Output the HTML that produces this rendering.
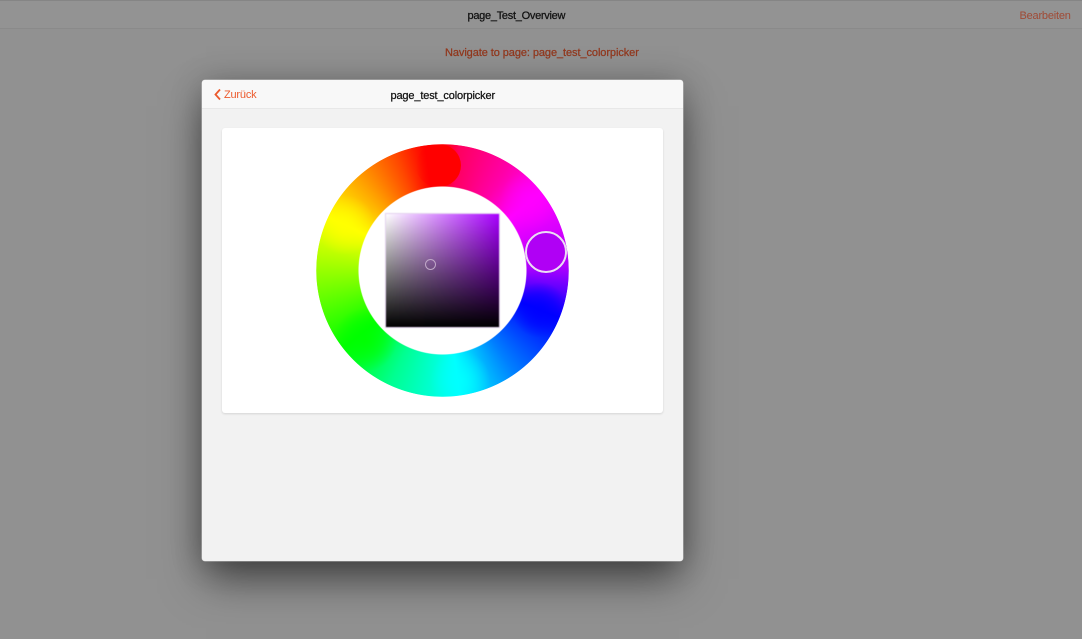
<!DOCTYPE html>
<html>
<head>
<meta charset="utf-8">
<style>
html,body{margin:0;padding:0;width:1082px;height:639px;overflow:hidden;background:#919191;font-family:"Liberation Sans",sans-serif;}
.abs{position:absolute;}
.t{position:absolute;white-space:nowrap;font-size:11px;line-height:14px;-webkit-text-stroke:.25px currentColor;filter:blur(.35px);}
#top{left:0;top:0;width:1082px;height:28px;background:#939393;border-bottom:1px solid #8a8a8a;box-shadow:inset 0 1px 0 #858585;}
#modal{left:202px;top:80px;width:481px;height:481px;background:#f2f2f2;border-radius:3px;box-shadow:0 0 0 .4px #cfcfcf,0 22px 40px -4px rgba(0,0,0,.5),0 2px 32px rgba(0,0,0,.24);overflow:hidden;}
#head{left:0;top:0;width:481px;height:28px;background:#f8f8f8;border-bottom:1px solid #e8e8e8;}
#card{left:222px;top:128px;width:441px;height:285px;background:#fff;border-radius:3px;box-shadow:0 1px 2px rgba(0,0,0,.13);}
#ring{left:316px;top:144px;width:253px;height:253px;border-radius:50%;overflow:hidden;
background:
 radial-gradient(circle 30px at 29px 81px,rgba(255,255,0,.9) 0,rgba(255,255,0,.45) 50%,rgba(255,255,0,0) 100%),
 radial-gradient(circle 30px at 214px 56px,rgba(255,0,255,.9) 0,rgba(255,0,255,.45) 50%,rgba(255,0,255,0) 100%),
 radial-gradient(circle 28px at 224px 166px,rgba(0,0,255,.9) 0,rgba(0,0,255,.5) 55%,rgba(0,0,255,0) 100%),
 radial-gradient(circle 30px at 144px 236px,rgba(0,255,255,.9) 0,rgba(0,255,255,.45) 50%,rgba(0,255,255,0) 100%),
 radial-gradient(circle 32px at 49px 196px,rgba(0,255,0,.9) 0,rgba(0,255,0,.5) 55%,rgba(0,255,0,0) 100%),
 conic-gradient(from 0deg,#f00 0deg,#ff0060 8deg,#ff00a8 32deg,#f0f 52deg,#b000ff 88deg,#00f 112deg,#0080ff 145deg,#0ff 172deg,#00ff90 205deg,#0f0 232deg,#90ff00 268deg,#ff0 295deg,#ffa000 318deg,#ff4800 338deg,#f00 352deg,#f00 360deg);
-webkit-mask:radial-gradient(circle 126.5px at center,transparent 83.5px,#000 84.5px,#000 126px,transparent 126.5px);
mask:radial-gradient(circle 126.5px at center,transparent 83.5px,#000 84.5px,#000 126px,transparent 126.5px);}
#blob{position:absolute;left:100px;top:0;width:45px;height:43px;border-radius:50%;background:linear-gradient(to right,rgba(255,0,0,0),#f00 50%);}
#sq{left:386px;top:214px;width:113px;height:113px;background:linear-gradient(to bottom,rgba(0,0,0,0),#000),linear-gradient(to right,#fff,#a800ff);box-shadow:0 0 0 1px rgba(205,175,225,.55);filter:blur(.4px);}
#h1{left:525px;top:231px;width:38px;height:38px;border-radius:50%;background:#b000f5;border:2px solid #ecdcf5;box-shadow:0 0 1px rgba(0,0,0,.2);filter:blur(.3px);}
#h2{left:425px;top:259px;width:9px;height:9px;border-radius:50%;border:1.5px solid #c0a8c8;filter:blur(.2px);}
</style>
</head>
<body>
<div class="abs" id="top"></div>
<div class="t" style="left:467.5px;top:8.5px;color:#111;letter-spacing:-.28px;">page_Test_Overview</div>
<div class="t" style="left:1019.5px;top:8.5px;color:#a04a35;letter-spacing:-.2px;-webkit-text-stroke:0;">Bearbeiten</div>
<div class="t" style="left:445px;top:46px;color:#93391f;letter-spacing:-.08px;">Navigate to page: page_test_colorpicker</div>
<div class="abs" id="modal">
  <div class="abs" id="head"></div>
</div>
<svg class="abs" style="left:213px;top:88px" width="9" height="13" viewBox="0 0 9 13"><path d="M7 1.5 L2.5 6.5 L7 11.5" fill="none" stroke="#ec5a2c" stroke-width="1.8"/></svg>
<div class="t" style="left:224px;top:88px;color:#ec5a2c;letter-spacing:-.2px;-webkit-text-stroke:0;">Zurück</div>
<div class="t" style="left:390.5px;top:88.5px;color:#111;letter-spacing:-.15px;">page_test_colorpicker</div>
<div class="abs" id="card"></div>
<div class="abs" id="ring"><div id="blob"></div></div>
<div class="abs" id="sq"></div>
<div class="abs" id="h1"></div>
<div class="abs" id="h2"></div>
</body>
</html>
